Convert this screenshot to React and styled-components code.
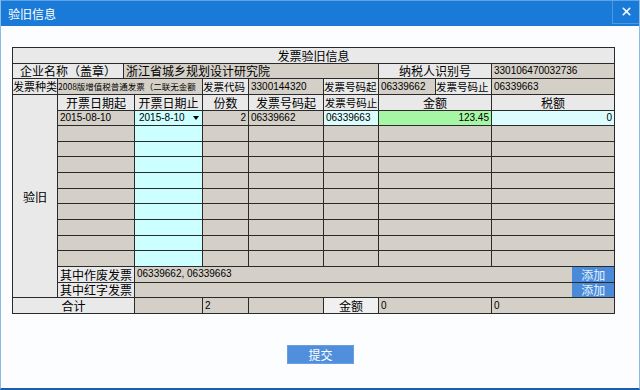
import React from 'react';
import styled, { createGlobalStyle } from 'styled-components';
import { X } from 'lucide-react';

const GlobalStyle = createGlobalStyle`
  html, body {
    margin: 0;
    padding: 0;
    background: #ffffff;
  }
  body {
    font-family: "Liberation Sans", "Noto Sans CJK SC", sans-serif;
  }
`;

const GRAY = '#d4d0c8';
const LIGHT = '#e9e9e9';

const Window = styled.div`
  width: 640px;
  height: 390px;
  box-sizing: border-box;
  background: #fbfdff;
  border-left: 1px solid #8dbbe8;
  border-right: 1px solid #8dbbe8;
  border-bottom: 2px solid #1a5fa8;
  display: flex;
  flex-direction: column;
`;

const TitleBar = styled.div`
  height: 26px;
  background: #1a7ad8;
  border-top: 1px solid #5fa3e6;
  box-sizing: border-box;
  display: flex;
  align-items: center;
  justify-content: space-between;
  padding-left: 7px;
  color: #ffffff;
  font-size: 12px;
  font-family: "Noto Sans CJK SC", sans-serif;
`;

const CloseButton = styled.div`
  width: 26px;
  height: 22px;
  margin-top: -3px;
  display: flex;
  align-items: center;
  justify-content: center;
  border-left: 1px solid #4f98e0;
  border-bottom: 1px solid #4f98e0;
  color: #ffffff;
`;

const Body = styled.div`
  flex: 1;
  display: flex;
  flex-direction: column;
  align-items: flex-start;
  padding-top: 21px;
  padding-left: 11px;
`;

const Table = styled.table`
  width: 602px;
  table-layout: fixed;
  border-collapse: collapse;
  border: 1px solid #333333;
  font-size: 12px;
  color: #000000;
`;

const Row = styled.tr`
  height: 15.65px;
`;

const Cell = styled.td`
  border: 1px solid #2a2a2a;
  padding: 0 ${p => (p.$tight ? 0 : 2)}px;
  background: ${p => p.$bg || GRAY};
  text-align: ${p => p.$align || 'left'};
  font-size: ${p => p.$size || 12}px;
  line-height: 13px;
  white-space: nowrap;
  overflow: hidden;
  font-family: ${p => (p.$num ? '"Liberation Sans", sans-serif' : '"Noto Sans CJK SC", sans-serif')};
  vertical-align: middle;
`;

const SelectBox = styled.div`
  display: flex;
  align-items: center;
  justify-content: space-between;
  padding: 0 3px 0 4px;
  font-size: 10px;
  font-family: "Liberation Sans", sans-serif;
`;

const Caret = styled.span`
  width: 0;
  height: 0;
  border-left: 3px solid transparent;
  border-right: 3px solid transparent;
  border-top: 4px solid #000000;
`;

const SplitCell = styled.div`
  display: flex;
  align-items: stretch;
  justify-content: space-between;
  height: 14px;
`;

const SplitText = styled.span`
  padding-left: 2px;
  font-size: 10px;
  font-family: "Liberation Sans", sans-serif;
  line-height: 14px;
`;

const AddButton = styled.button`
  width: 42px;
  height: 15px;
  margin: 0;
  padding: 0;
  border: none;
  background: #4a8bd9;
  color: #e8f2ff;
  font-size: 12px;
  line-height: 14px;
  font-family: "Noto Sans CJK SC", sans-serif;
`;

const SubmitButton = styled.button`
  align-self: center;
  margin-top: 31px;
  margin-left: -10px;
  width: 67px;
  height: 19px;
  padding: 0;
  border: 1px solid #6a9ee0;
  background: #4f8fdb;
  color: #ffffff;
  font-size: 12px;
  font-family: "Noto Sans CJK SC", sans-serif;
`;

const colWidths = [45, 66, 11, 68, 46, 75, 55, 57, 56, 123];

const EmptyRow = () => (
  <Row>
    <Cell colSpan={2} />
    <Cell $bg="#ccffff" />
    <Cell />
    <Cell />
    <Cell />
    <Cell colSpan={2} />
    <Cell />
  </Row>
);

export default function App() {
  const blanks = Array.from({ length: 9 }, (_, i) => i);
  return (
    <>
      <GlobalStyle />
      <Window>
        <TitleBar>
          <span>验旧信息</span>
          <CloseButton>
            <X size={13} strokeWidth={3} />
          </CloseButton>
        </TitleBar>
        <Body>
          <Table>
            <colgroup>
              {colWidths.map((w, i) => (
                <col key={i} style={{ width: w }} />
              ))}
            </colgroup>
            <tbody>
              <Row>
                <Cell colSpan={10} $bg={LIGHT} $align="center">发票验旧信息</Cell>
              </Row>
              <Row>
                <Cell colSpan={2} $bg={LIGHT} $align="center">企业名称（盖章）</Cell>
                <Cell colSpan={5}>浙江省城乡规划设计研究院</Cell>
                <Cell colSpan={2} $bg={LIGHT} $align="center">纳税人识别号</Cell>
                <Cell $num $size={10}>330106470032736</Cell>
              </Row>
              <Row>
                <Cell $bg={LIGHT} $size={11} $tight>发票种类</Cell>
                <Cell colSpan={3} $size={8.5} $tight>2008版增值税普通发票（二联无金额</Cell>
                <Cell $bg={LIGHT} $size={10.5} $tight>发票代码</Cell>
                <Cell $num $size={10}>3300144320</Cell>
                <Cell $bg={LIGHT} $size={10.5} $tight>发票号码起</Cell>
                <Cell $num $size={10}>06339662</Cell>
                <Cell $bg={LIGHT} $size={10.5} $tight>发票号码止</Cell>
                <Cell $num $size={10}>06339663</Cell>
              </Row>
              <Row>
                <Cell rowSpan={13} $bg={LIGHT} $align="center">验旧</Cell>
                <Cell colSpan={2} $bg={LIGHT} $align="center">开票日期起</Cell>
                <Cell $bg={LIGHT} $align="center">开票日期止</Cell>
                <Cell $bg={LIGHT} $align="center">份数</Cell>
                <Cell $bg={LIGHT} $align="center">发票号码起</Cell>
                <Cell $bg={LIGHT} $align="center" $size={10.5} $tight>发票号码止</Cell>
                <Cell colSpan={2} $bg={LIGHT} $align="center">金额</Cell>
                <Cell $bg={LIGHT} $align="center">税额</Cell>
              </Row>
              <Row>
                <Cell colSpan={2} $num $size={10}>2015-08-10</Cell>
                <Cell $bg="#ccffff" $tight>
                  <SelectBox>
                    <span>2015-8-10</span>
                    <Caret />
                  </SelectBox>
                </Cell>
                <Cell $num $size={10} $align="right">2</Cell>
                <Cell $num $size={10}>06339662</Cell>
                <Cell $num $size={10} $bg="#dcfdfd">06339663</Cell>
                <Cell colSpan={2} $num $size={10} $align="right" $bg="#a5f7a5">123.45</Cell>
                <Cell $num $size={10} $align="right" $bg="#dcfdfd">0</Cell>
              </Row>
              {blanks.map(i => (
                <EmptyRow key={i} />
              ))}
              <Row>
                <Cell colSpan={2} $bg={LIGHT} $align="center">其中作废发票</Cell>
                <Cell colSpan={7} $tight>
                  <SplitCell>
                    <SplitText>06339662, 06339663</SplitText>
                    <AddButton>添加</AddButton>
                  </SplitCell>
                </Cell>
              </Row>
              <Row>
                <Cell colSpan={2} $bg={LIGHT} $align="center">其中红字发票</Cell>
                <Cell colSpan={7} $tight>
                  <SplitCell>
                    <SplitText />
                    <AddButton>添加</AddButton>
                  </SplitCell>
                </Cell>
              </Row>
              <Row>
                <Cell colSpan={3} $bg={LIGHT} $align="center">合计</Cell>
                <Cell />
                <Cell $num $size={10}>2</Cell>
                <Cell />
                <Cell $bg="#f0f0f0" $align="center">金额</Cell>
                <Cell colSpan={2} $num $size={10}>0</Cell>
                <Cell $num $size={10}>0</Cell>
              </Row>
            </tbody>
          </Table>
          <SubmitButton>提交</SubmitButton>
        </Body>
      </Window>
    </>
  );
}
